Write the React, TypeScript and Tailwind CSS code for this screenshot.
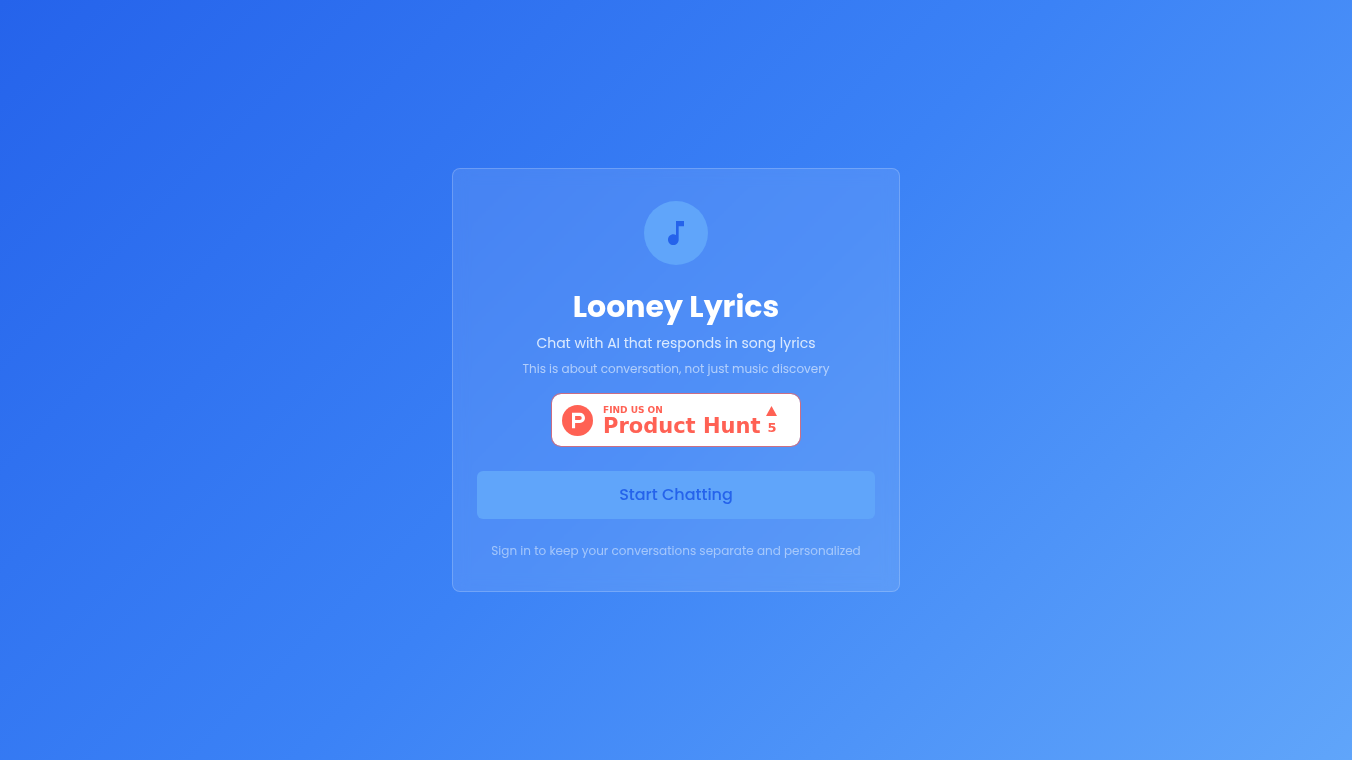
import { MdMusicNote } from 'react-icons/md';

function ProductHuntBadge() {
  return (
    <a
      href="#product-hunt"
      className="flex h-[54px] w-[250px] items-center rounded-[10px] border border-[#ff6154]/70 bg-white bg-clip-padding pl-[10px] text-left font-['DejaVu_Sans',sans-serif] font-bold text-[#ff6154]"
    >
      <svg className="h-[31px] w-[31px] shrink-0" viewBox="0 0 31 31" aria-hidden="true">
        <circle cx="15.5" cy="15.5" r="15.5" fill="#ff6154" />
        <path
          fill="#fff"
          fillRule="evenodd"
          d="M10 7.8h7.9a5.1 5.1 0 0 1 0 10.2h-4.8v5.3H10zM13.1 10.9V15h4.6a2 2 0 0 0 0-4.1z"
        />
      </svg>
      <span className="ml-[10px] flex flex-col pt-[2px]">
        <span className="text-[9px] leading-[10px]">FIND US ON</span>
        <span className="text-[21px] leading-[22px] whitespace-nowrap">Product Hunt</span>
      </span>
      <span className="ml-[6px] flex flex-col items-center gap-1 pt-[2px]">
        <svg className="h-[10px] w-[11px]" viewBox="0 0 11 10" aria-hidden="true">
          <path fill="#ff6154" d="M5.5 0 11 10H0z" />
        </svg>
        <span className="text-[13px] leading-4">5</span>
      </span>
    </a>
  );
}

export default function App() {
  return (
    <main className="flex min-h-screen items-center justify-center bg-[linear-gradient(135deg,#2563eb_0%,#3b82f6_50%,#60a5fa_100%)] p-4 font-[Poppins,'Noto_Sans',sans-serif]">
      <section className="flex w-full max-w-md flex-col items-center rounded-lg border border-white/20 bg-white/10 px-6 py-8 text-center antialiased backdrop-blur-sm">
        <div className="flex h-16 w-16 items-center justify-center rounded-full bg-[#60a5fa]">
          <MdMusicNote className="h-8 w-8 text-[#2563eb]" aria-hidden="true" />
        </div>
        <h1 className="mt-6 text-[30px] leading-9 font-bold text-white">Looney Lyrics</h1>
        <p className="mt-2 text-sm leading-5 text-[#dbeafe]">Chat with AI that responds in song lyrics</p>
        <p className="mt-2 mb-4 text-xs leading-4 text-[#dbeafe]/70">This is about conversation, not just music discovery</p>
        <ProductHuntBadge />
        <button
          type="button"
          className="mt-6 h-12 w-full rounded-md bg-[#60a5fa] text-base font-medium text-[#2563eb]"
        >
          Start Chatting
        </button>
        <p className="mt-6 text-xs leading-4 text-[#dbeafe]/60">Sign in to keep your conversations separate and personalized</p>
      </section>
    </main>
  );
}
